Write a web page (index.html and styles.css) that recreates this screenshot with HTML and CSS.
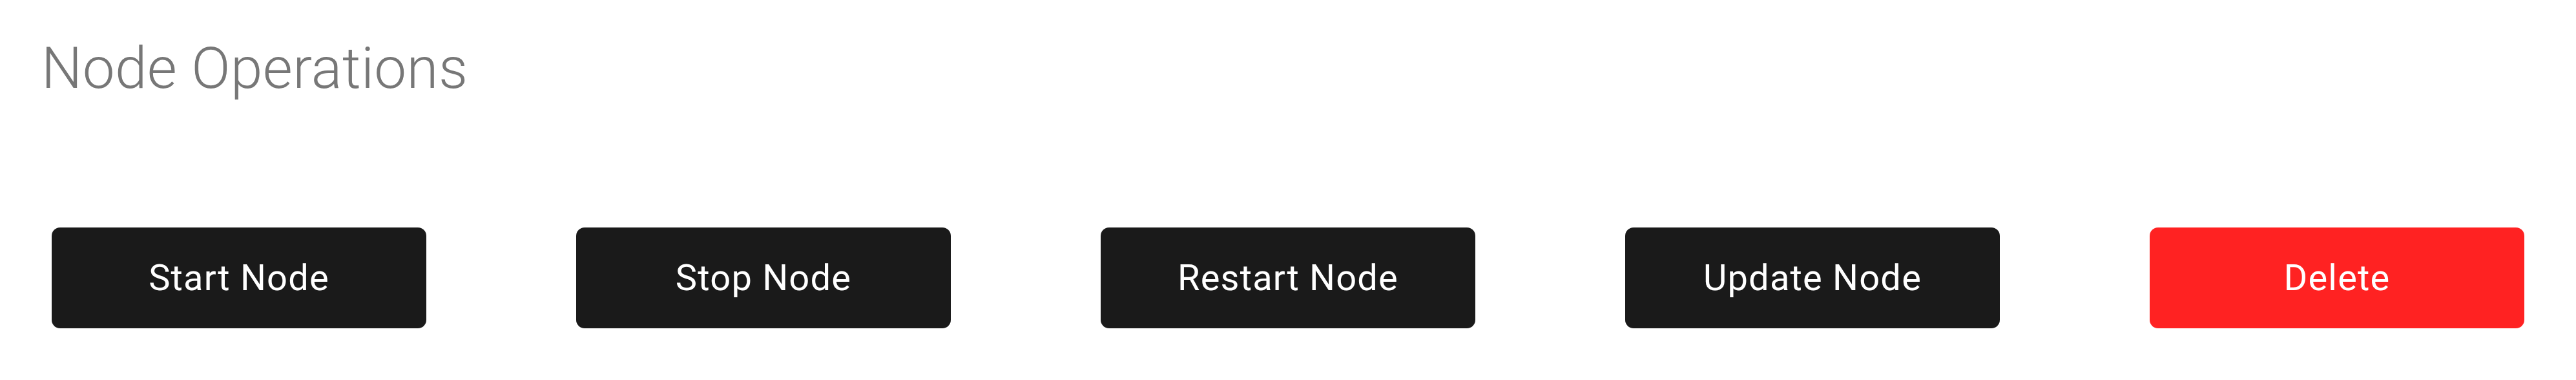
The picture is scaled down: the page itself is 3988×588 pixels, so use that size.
FILE: index.html
```html
<!DOCTYPE html>
<html lang="en">
<head>
<meta charset="utf-8">
<title>Node Operations</title>
<link rel="stylesheet" href="styles.css">
</head>
<body>
  <main class="page">
    <h1 class="title">Node Operations</h1>
    <div class="actions">
      <button class="btn">Start Node</button>
      <button class="btn">Stop Node</button>
      <button class="btn">Restart Node</button>
      <button class="btn">Update Node</button>
      <button class="btn btn-danger">Delete</button>
    </div>
  </main>
</body>
</html>
```
FILE: styles.css
```css
html, body {
  margin: 0;
  padding: 0;
  background: #ffffff;
}

.page {
  padding: 54px 80px 0 80px;
  font-family: Roboto, "Noto Sans", sans-serif;
}

.title {
  margin: 0 0 0 -16px;
  font-family: Roboto, "Noto Sans", sans-serif;
  font-weight: 300;
  font-size: 89px;
  line-height: 104px;
  height: 104px;
  color: #777777;
  letter-spacing: 0.4px;
}

.actions {
  margin-top: 194px;
  display: grid;
  grid-template-columns: repeat(5, 1fr);
  column-gap: 232px;
}

.btn {
  height: 156px;
  border: none;
  border-radius: 13px;
  background: #1a1a1a;
  color: #ffffff;
  font-family: Roboto, "Noto Sans", sans-serif;
  font-weight: 400;
  font-size: 56px;
  letter-spacing: 1.2px;
  display: flex;
  align-items: center;
  justify-content: center;
  padding: 0;
  cursor: pointer;
}

.btn-danger {
  background: #ff2222;
}
```
